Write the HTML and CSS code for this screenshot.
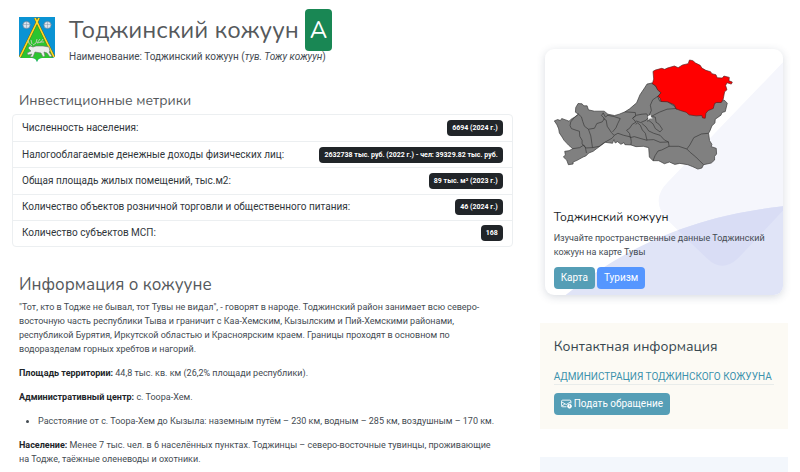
FILE: index.html
```html
<!DOCTYPE html>
<html lang="ru">
<head>
<meta charset="utf-8">
<meta name="viewport" content="width=device-width, initial-scale=1">
<title>Тоджинский кожуун</title>
<link rel="stylesheet" href="styles.css">
</head>
<body>
<div class="page">
  <main class="main">
    <header class="intro">
      <svg class="crest" viewBox="0 0 36 45" aria-hidden="true">
        <path d="M0 0H36V38Q36 41 33 41H23Q19 41 18 45Q17 41 13 41H3Q0 41 0 38Z" fill="#0b93d3"/>
        <path d="M18 4 34 38Q35 41 32 41H23Q19 41 18 45Q17 41 13 41H3Q1 41 1 39Z" fill="#2cc52f"/>
        <path d="M16 1 35 40M20 1 1 40" stroke="#6b5b12" stroke-width="2.4" fill="none"/>
        <path d="M16 1 35 40M20 1 1 40" stroke="#ffdc26" stroke-width="1.7" fill="none"/>
        <g fill="#dbe4ee" stroke="#68788c" stroke-width=".6"><circle cx="7.500" cy="8" r="3.600"/><circle cx="28.500" cy="8" r="3.600"/></g>
        <path d="M3 7.500H12M24 7.500H33M7.500 5V11M28.500 5V11" stroke="#8193a8" stroke-width=".5"/>
        <path d="M9 31 11 29 14 30 17 29 24 29 30 30 31 34 30 35 33 39 31 40 28 36 25 35 26 39 24 40 22 36 16 35 14 40 11 40 13 37 9 38 8 36 12 34Z" fill="#eceeec" stroke="#667066" stroke-width=".6"/>
        <path d="M13 29Q9 27 9 23M14 28Q18 27 18 22M18 26Q23 26 24 22M18 26 21 22M13 27 12 23M21 25 25 25" stroke="#b7c7b0" stroke-width="1" fill="none"/>
      </svg>
      <div>
        <h1>Тоджинский кожуун <span class="grade">A</span></h1>
        <p class="name">Наименование: Тоджинский кожуун (<em>тув. Тожу кожуун</em>)</p>
      </div>
    </header>

    <section class="metrics">
      <h3>Инвестиционные метрики</h3>
      <ul class="metric-list">
        <li><span>Численность населения:</span><span class="badge">6694 (2024 г.)</span></li>
        <li><span>Налогооблагаемые денежные доходы физических лиц:</span><span class="badge">2632738 тыс. руб. (2022 г.) - чел: 39329.82 тыс. руб.</span></li>
        <li><span>Общая площадь жилых помещений, тыс.м2:</span><span class="badge">89 тыс. м² (2023 г.)</span></li>
        <li><span>Количество объектов розничной торговли и общественного питания:</span><span class="badge">46 (2024 г.)</span></li>
        <li><span>Количество субъектов МСП:</span><span class="badge">168</span></li>
      </ul>
    </section>

    <section class="about">
      <h2>Информация о кожууне</h2>
      <p>"Тот, кто в Тодже не бывал, тот Тувы не видал", - говорят в народе. Тоджинский район занимает всю северо-<br>восточную часть республики Тыва и граничит с Каа-Хемским, Кызылским и Пий-Хемскими районами,<br>республикой Бурятия, Иркутской областью и Красноярским краем. Границы проходят в основном по<br>водоразделам горных хребтов и нагорий.</p>
      <p><strong>Площадь территории:</strong> 44,8 тыс. кв. км (26,2% площади республики).</p>
      <p><strong>Административный центр:</strong> с. Тоора-Хем.</p>
      <ul>
        <li>Расстояние от с. Тоора-Хем до Кызыла: наземным путём – 230 км, водным – 285 км, воздушным – 170 км.</li>
      </ul>
      <p><strong>Население:</strong> Менее 7 тыс. чел. в 6 населённых пунктах. Тоджинцы – северо-восточные тувинцы, проживающие<br>на Тодже, таёжные оленеводы и охотники.</p>
    </section>
  </main>

  <aside class="side">
    <article class="card">
      <svg class="card-bg" viewBox="0 0 237 246" preserveAspectRatio="none" aria-hidden="true">
        <path d="M237 13 122 133Q104 151 122 171L161 209Q176 224 192 209L237 161Z" fill="#f5f6fc"/>
        <path d="M20 246C85 193 153 166 237 157V246Z" fill="#e0e4f7"/>
        <path d="M132 181Q180 163 237 157V161L192 209Q176 224 161 209Z" fill="#d9ddf5"/>
      </svg>
      <svg class="map" viewBox="60 57 540 336" role="img" aria-label="Карта кожуунов Тувы">
        <path class="land" d="M61 242 71 238 79 241 83 235 95 239 105 243 111 237 121 231 133 222 124 216 125 202 132 190 144 191 149 197 159 197 163 209 181 213 210 213 221 222 241 226 255 222 272 215 286 206 307 188 317 164 331 143 338 132 352 129 390 135 430 190 510 210 536 188 557 186 568 179 578 189 572 214 562 217 559 225 542 237 541 248 532 257 526 272 522 279 525 301 532 312 530 319 545 324 546 341 540 348 540 359 530 368 507 373 502 383 490 386 475 379 460 373 436 369 421 372 405 365 390 370 373 361 356 361 345 350 343 322 327 318 305 319 290 314 272 313 269 307 260 312 250 304 243 308 239 298 235 309 213 306 201 315 186 326 177 333 164 338 155 347 147 350 129 360 117 365 117 371 103 373 98 359 88 350 94 344 92 333 105 331 116 325 104 315 90 300 84 290 76 278 74 266 69 254Z"/>
        <path class="border" d="M133 222 120 233 110 245 108 256 112 265 126 270 136 273 137 288 144 300 144 311 154 322 157 338M133 222 142 230 146 244 151 258 163 267 170 287 175 322M163 267 181 264 188 250 204 245 211 235 202 226 207 218 214 231 221 224M116 325 137 322 149 314 155 323 175 322 195 318 210 307 233 294 240 286 231 276 219 258 216 240 207 235M219 225 239 229 258 235 251 249 245 263 235 275M240 285 251 279 268 285 289 290 291 304 290 314M272 215 303 217 304 226 295 234 305 246 294 252 286 264 277 270 286 280 288 292 300 289 320 295 338 300 333 279 324 269 318 255 310 248 304 252M295 234 307 225 323 222 337 221 343 231 335 240 319 247 305 242M338 243 344 241 356 251 363 265 377 275 384 267 374 252 365 246 363 231 354 229M322 249 335 260 343 272 358 279 377 285 390 299 402 305 404 318 433 318 457 326 467 336 484 350 507 373M338 299 358 298 377 306 403 305M404 318 382 329 371 332 362 346 356 361M457 326 466 314 478 292 501 281 522 279M352 129 362 137 372 150 380 158 371 168 355 179 348 195 351 211 345 224 352 228 375 216 398 207 425 205M369 168 376 183 398 184 420 198 426 208"/>
        <path d="M341 228 349 224 350 230 355 235 346 235 342 239Z" fill="#fff"/>
        <path class="active" d="M354 131 358 117 356 94 363 90 382 85 391 88 399 84 420 78 431 83 444 75 461 71 465 60 475 62 483 69 497 76 502 84 514 91 528 95 532 101 544 104 548 113 563 114 568 108 584 112 583 122 593 126 590 132 577 128 573 136 577 149 570 155 566 176 560 187 546 187 540 190 536 205 521 211 514 219 512 234 504 233 502 226 485 227 464 224 455 216 438 211 425 206 420 194 400 185 380 184 378 175 371 168 380 158 370 150 364 137Z"/>
      </svg>
      <div class="card-body">
        <h4>Тоджинский кожуун</h4>
        <p>Изучайте пространственные данные Тоджинский кожуун на карте Тувы</p>
        <div class="actions"><a class="btn" href="#map">Карта</a><a class="btn btn-blue" href="#tourism">Туризм</a></div>
      </div>
    </article>

    <section class="contact">
      <h3>Контактная информация</h3>
      <a class="office" href="#office">АДМИНИСТРАЦИЯ ТОДЖИНСКОГО КОЖУУНА</a>
      <a class="btn" href="#appeal">
        <svg class="mail" viewBox="0 0 20 18" fill="none" stroke="currentColor" stroke-width="1.6" aria-hidden="true"><path d="M10 14H3Q1 14 1 12V4Q1 2 3 2H16Q18 2 18 4V8M1 5 9.500 10 18 5M1 13 7 9"/><circle cx="15.500" cy="13" r="3.500" fill="currentColor"/><path d="M15.500 11V14" stroke="#559eb6" stroke-width="1.200"/></svg>
        Подать обращение</a>
    </section>
    <section class="next-panel"></section>
  </aside>
</div>
</body>
</html>
```
FILE: styles.css
```css
* { box-sizing: border-box; }
body {
  margin: 0;
  background: #fff;
  color: #444b52;
  font: 10px/14px Roboto, "Liberation Sans", sans-serif;
}
h1, h2, h3, h4 {
  margin: 0;
  font-family: Nunito, Lato, "Open Sans", sans-serif;
  font-weight: 400;
  color: #55595c;
}
p, ul { margin: 0; }
a { text-decoration: none; }

.page {
  display: grid;
  grid-template-columns: minmax(0, 1fr) 32%;
  gap: 20px;
  padding: 0 12px;
  height: 100vh;
  overflow: hidden;
}

.intro { display: flex; gap: 14px; padding: 9px 0 0 7px; }
.crest { width: 36px; height: 45px; margin-top: 8px; flex: none; }
h1 { display: flex; align-items: center; gap: 6px; font-size: 24px; line-height: 42px; }
.grade { padding: 0 5px; border-radius: 4px; background: #198754; color: #fff; }
.name { margin-top: -1px; }

.metrics { padding: 28px 7px 0 0; }
.metrics h3 { padding-left: 7px; font-size: 14px; line-height: 18px; margin-bottom: 4px; }
.metric-list {
  display: grid;
  grid-auto-rows: 1fr;
  min-height: 133px;
  padding: 0;
  list-style: none;
  border: 1px solid #eceff1;
  border-radius: 4px;
  color: #30363b;
}
.metric-list li { display: flex; align-items: center; justify-content: space-between; padding: 0 9px; }
.metric-list li + li { border-top: 1px solid #eceff1; }
.badge { padding: 1px 5px; border-radius: 4px; background: #212529; color: #fff; font-size: 7px; font-weight: 700; }

.about { padding: 27px 0 0 7px; font-size: 9px; white-space: nowrap; }
.about h2 { font-size: 17px; line-height: 22px; margin-bottom: 4px; }
.about p, .about ul { margin-bottom: 10px; }
.about ul { padding-left: 19px; }
.about strong { color: #212529; }

.card {
  position: relative;
  margin: 49px 5px 28px;
  border-radius: 9px;
  overflow: hidden;
  padding: 10px 9px 6px;
  box-shadow: 0 2px 8px #30406030;
}
.card-bg { position: absolute; inset: 0; width: 100%; height: 100%; }
.map { position: relative; display: block; width: 82%; }
.land { fill: #808080; stroke: #383838; stroke-width: 2; }
.border { fill: none; stroke: #383838; stroke-width: 2; }
.active { fill: #f00; stroke: #5a2020; stroke-width: 2; }
.card-body { position: relative; padding-top: 37px; font-size: 9px; }
.card h4 { font-size: 12px; line-height: 18px; color: #212529; margin-bottom: 5px; }
.actions { display: flex; gap: 2px; margin-top: 8px; }
.btn { display: inline-flex; align-items: center; gap: 2px; padding: 4px 7px; border-radius: 4px; background: #559eb6; color: #fff; font-size: 10px; }
.btn-blue { background: #5596ff; }

.contact { background: #fcfaf4; padding: 14px; }
.contact h3 { font-size: 14px; line-height: 20px; color: #37474f; margin-bottom: 13px; }
.office { display: block; border-bottom: 1px solid #e9ecea; color: #3d92ad; margin-bottom: 8px; }
.mail { width: 11px; height: 10px; }
.next-panel { margin-top: 28px; min-height: 100px; background: #f3f7fc; }
```
